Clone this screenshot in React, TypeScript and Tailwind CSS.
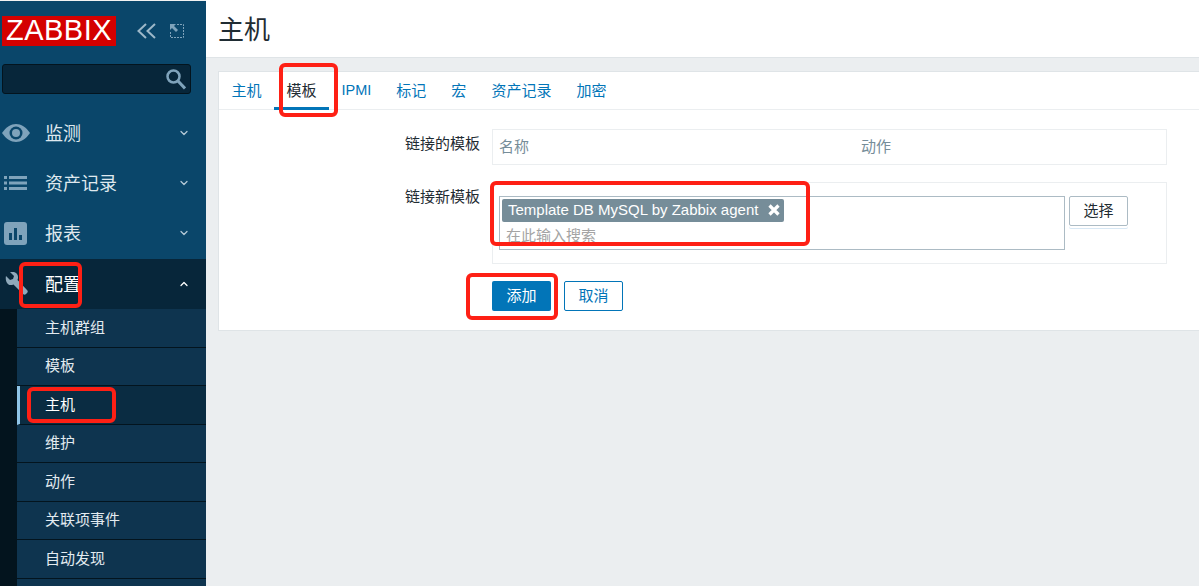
import { ChevronDown, ChevronUp } from 'lucide-react'
import type { ReactNode } from 'react'

const tabs = ['主机', '模板', 'IPMI', '标记', '宏', '资产记录', '加密']
const subItems = ['主机群组', '模板', '主机', '维护', '动作', '关联项事件', '自动发现']

function EyeIcon() {
  return (
    <svg width="30" height="20" viewBox="0 0 30 20">
      <path d="M1 10C5 4 10 1 15 1s10 3 14 9c-4 6-9 9-14 9S5 16 1 10z" fill="#7fa3bb" />
      <circle cx="15" cy="10" r="6.5" fill="#0a466a" />
      <circle cx="15" cy="10" r="4" fill="#7fa3bb" />
    </svg>
  )
}

function ListIcon() {
  return (
    <svg width="24" height="14" viewBox="0 0 24 14" fill="#7fa3bb">
      <rect x="0" y="0" width="3" height="3" />
      <rect x="5" y="0" width="18" height="3" />
      <rect x="0" y="5.5" width="3" height="3" />
      <rect x="5" y="5.5" width="18" height="3" />
      <rect x="0" y="11" width="3" height="3" />
      <rect x="5" y="11" width="18" height="3" />
    </svg>
  )
}

function ChartIcon() {
  return (
    <svg width="23" height="23" viewBox="0 0 23 23">
      <rect width="23" height="23" rx="3" fill="#7fa3bb" />
      <rect x="5" y="11" width="3" height="7" fill="#0a466a" />
      <rect x="10" y="6" width="3" height="12" fill="#0a466a" />
      <rect x="15" y="13" width="3" height="5" fill="#0a466a" />
    </svg>
  )
}

function WrenchIcon() {
  return (
    <svg width="24" height="24" viewBox="0 0 24 24" fill="#8fa9bb">
      <path d="M2 4l4 4 3-1 1-3-4-4c4-1 8 1 8 5 0 1 0 2-.5 3L23 18c1 1 1 2 0 3l-1 1c-1 1-2 1-3 0L9.500 12.500C8.500 13 7.500 13 6.500 13 3 13 1 8 2 4z" />
    </svg>
  )
}

function ExpandIcon() {
  return (
    <svg width="16" height="16" viewBox="0 0 16 16" fill="none" stroke="#7fa3bb">
      <path d="M8 1.500h6.500V14.500H1.500V8" strokeDasharray="2 1" />
      <path d="M1 1h6L5 3l4 4-2 2-4-4-2 2z" fill="#7fa3bb" stroke="none" />
    </svg>
  )
}

function CollapseIcon() {
  return (
    <svg width="19" height="16" viewBox="0 0 19 16" fill="none" stroke="#9db8c9" strokeWidth="2">
      <path d="M9 1L1.500 8 9 15" />
      <path d="M18 1L10.500 8 18 15" />
    </svg>
  )
}

function SearchIcon() {
  return (
    <svg width="20" height="21" viewBox="0 0 20 21" fill="none" stroke="#7fa3bb">
      <circle cx="7.500" cy="7.500" r="6" strokeWidth="2.500" />
      <path d="M12 12l7 7.500" strokeWidth="3" />
    </svg>
  )
}

function MenuItem({ icon, label, open }: { icon: ReactNode; label: string; open?: boolean }) {
  return (
    <div className={`flex h-[50px] items-center pr-[16px] ${open ? 'bg-[#07263a] text-white' : 'text-[#dfe8ee]'}`}>
      <div className="flex w-[45px] shrink-0 justify-start">{icon}</div>
      <span className="flex-1 pt-[2px] text-[18px]">{label}</span>
      {open ? (
        <ChevronUp size={12} strokeWidth={2.5} className="text-white" />
      ) : (
        <ChevronDown size={12} strokeWidth={2.5} className="text-[#b5c9d6]" />
      )}
    </div>
  )
}

function Mark({ className }: { className: string }) {
  return <div className={`pointer-events-none absolute rounded-[6px] border-[4px] border-[#fe2015] ${className}`} />
}

export default function App() {
  return (
    <div className="relative flex h-[586px] w-[1199px] overflow-hidden bg-[#ebeef0] font-['Liberation_Sans','Noto_Sans_CJK_SC',sans-serif]">
      <aside className="flex w-[206px] shrink-0 flex-col border-t border-[#f2f2f2] bg-[#0a466a]">
        <div className="flex h-[63px] items-center pb-[4px] pl-[2px]">
          <div className="flex h-[30px] w-[114px] items-center justify-center bg-[#d40000] text-[29px] leading-none tracking-[0.5px] text-white">
            ZABBIX
          </div>
          <div className="ml-[21px] flex">
            <CollapseIcon />
          </div>
          <div className="ml-[13px] flex">
            <ExpandIcon />
          </div>
        </div>
        <div className="ml-[2px] flex h-[30px] w-[189px] items-center justify-end rounded-[3px] border border-[#03141e] bg-[#07263a] pr-[4px]">
          <SearchIcon />
        </div>
        <div className="mt-[14px] flex flex-col">
          <MenuItem icon={<div className="pl-[1px]"><EyeIcon /></div>} label="监测" />
          <MenuItem icon={<div className="pl-[4px]"><ListIcon /></div>} label="资产记录" />
          <MenuItem icon={<div className="pl-[4px]"><ChartIcon /></div>} label="报表" />
          <div className="mt-[1px]">
            <MenuItem icon={<div className="pl-[4px]"><WrenchIcon /></div>} label="配置" open />
          </div>
        </div>
        <div className="flex-1 border-l-[17px] border-[#03141e] bg-[#0e344f]">
          {subItems.map(item => (
            <div
              key={item + 'row'}
              className={`flex h-[38.5px] items-center border-b border-[#03141e] text-[15px] ${
                item === '主机'
                  ? 'border-l-[3px] border-l-[#8fc5e8] bg-[#0a2c42] pl-[25px] text-white'
                  : 'pl-[28px] text-[#e3ebf0]'
              }`}
            >
              {item}
            </div>
          ))}
        </div>
      </aside>

      <main className="flex-1">
        <header className="flex h-[58px] items-center border-b border-[#dfe4e7] bg-white pl-[12px] pt-[4px] text-[26px] text-[#1f2c33]">
          主机
        </header>
        <section className="ml-[12px] mt-[13px] h-[260px] border border-r-0 border-[#dfe4e7] bg-white">
          <nav className="flex h-[38px] border-b border-[#ebeef0] text-[15px] text-[#0275b8]">
            {tabs.map((tab, i) => (
              <div
                key={tab}
                className={`flex h-[38px] items-center border-b-[3px] px-[12.5px] pt-[3px] ${
                  i === 1 ? 'border-[#0275b8] text-[#1f2c33]' : 'border-transparent'
                } ${i === 2 ? 'text-[14.5px]' : ''}`}
              >
                {tab}
              </div>
            ))}
          </nav>

          <div className="mt-[19px] flex">
            <label className="w-[261px] pt-[1px] text-right text-[15px] leading-[28px] text-[#1f2c33]">链接的模板</label>
            <div className="ml-[12px] flex h-[36px] w-[675px] items-center border border-[#ebeef0] pl-[6px] text-[15px] text-[#768d99]">
              <span className="w-[362px]">名称</span>
              <span>动作</span>
            </div>
          </div>

          <div className="mt-[17px] flex">
            <label className="w-[261px] pt-[1px] text-right text-[15px] leading-[28px] text-[#1f2c33]">链接新模板</label>
            <div className="ml-[12px] flex h-[82px] w-[675px] items-start border border-[#ebeef0] pl-[6px] pt-[13px]">
              <div className="h-[54px] w-[566px] border border-[#acbbc4] pl-[2px] pt-[2px]">
                <div className="flex h-[23px] w-[282px] items-center justify-between rounded-[2px] bg-[#768d99] pl-[6px] pr-[3px] text-[15px] text-white">
                  <span className="whitespace-nowrap">Template DB MySQL by Zabbix agent</span>
                  <svg width="12" height="12" viewBox="0 0 12 12" stroke="#fff" strokeWidth="3.2" className="mb-[2px] mr-[1px]">
                    <path d="M1.500 1.500l9 9M10.500 1.500l-9 9" />
                  </svg>
                </div>
                <div className="pl-[4px] pt-[4px] text-[15px] leading-[20px] text-[#a4a4a4]">在此输入搜索</div>
              </div>
              <button className="ml-[4px] h-[30px] w-[59px] rounded-[2px] border border-[#acbbc4] bg-white text-[15px] text-[#1f2c33] shadow-[0_2px_0_0_#fff,0_3px_0_0_#d8e8f5]">
                选择
              </button>
            </div>
          </div>

          <div className="ml-[273px] mt-[17px] flex gap-[13px]">
            <button className="h-[30px] w-[59px] rounded-[2px] bg-[#0275b8] text-[15px] text-white">添加</button>
            <button className="h-[30px] w-[59px] rounded-[2px] border border-[#0275b8] bg-white text-[15px] text-[#0275b8]">取消</button>
          </div>
        </section>
      </main>

      <Mark className="left-[279px] top-[63px] h-[54px] w-[59px]" />
      <Mark className="left-[19px] top-[262px] h-[46px] w-[63px]" />
      <Mark className="left-[27px] top-[387px] h-[36px] w-[89px]" />
      <Mark className="left-[490px] top-[181px] h-[65px] w-[320px]" />
      <Mark className="left-[466px] top-[273px] h-[47px] w-[92px]" />
    </div>
  )
}
